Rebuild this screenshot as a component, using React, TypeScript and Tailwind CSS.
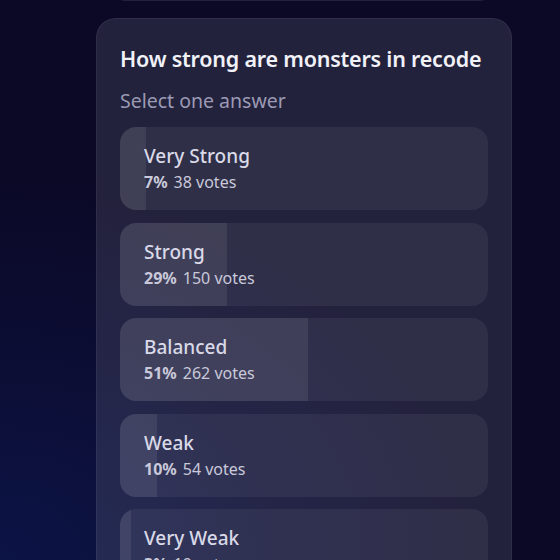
const options = [
  { label: 'Very Strong', pct: 7, votes: 38 },
  { label: 'Strong', pct: 29, votes: 150 },
  { label: 'Balanced', pct: 51, votes: 262 },
  { label: 'Weak', pct: 10, votes: 54 },
  { label: 'Very Weak', pct: 3, votes: 19 },
]

const PollOption = ({ label, pct, votes }: { label: string; pct: number; votes: number }) => (
  <div className="relative h-[83px] overflow-hidden rounded-2xl bg-white/[0.06]">
    <div className="absolute inset-y-0 left-0 bg-white/[0.08]" style={{ width: `${pct}%` }} />
    <div className="relative flex h-full flex-col justify-center pl-6">
      <span className="text-[19px] leading-6 font-medium text-[#d9d9e8]">{label}</span>
      <span className="mt-[3px] text-[16px] leading-[22px] text-[#c9c9da]">
        <span className="font-bold">{pct}%</span>
        <span className="ml-[6px]">{votes} votes</span>
      </span>
    </div>
  </div>
)

export default function App() {
  return (
    <div
      className="h-[560px] w-[560px] overflow-hidden bg-[radial-gradient(ellipse_90%_70%_at_0%_100%,#0c1446_0%,#0c0d33_55%,#0b0926_100%)]"
      style={{ fontFamily: '"Noto Sans", sans-serif' }}
    >
      <div className="ml-[110px] -mt-[40px] h-[41px] w-[385px] rounded-2xl bg-white/[0.1]" />
      <div className="mt-[17px] ml-[96px] w-[416px] rounded-[20px] border border-white/[0.06] bg-white/[0.1] px-[23px] pt-[26px]">
        <h2 className="whitespace-nowrap text-[21.5px] leading-7 font-semibold tracking-[-0.01em] text-[#f1f1f8]">
          How strong are monsters in recode
        </h2>
        <p className="mt-[16px] text-[19.5px] leading-6 text-[#9b9ab4]">Select one answer</p>
        <div className="mt-[14px] flex flex-col gap-[12.5px] pb-6">
          {options.map((o) => (
            <PollOption key={o.label} {...o} />
          ))}
        </div>
      </div>
    </div>
  )
}
